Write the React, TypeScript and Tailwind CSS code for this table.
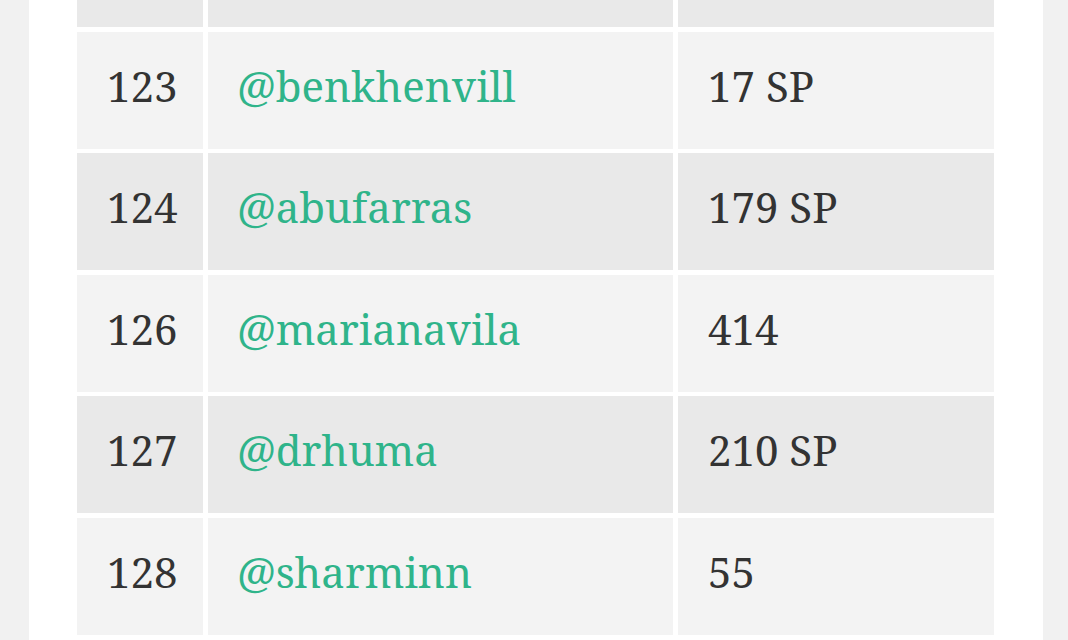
const rows = [
  { rank: "123", user: "@benkhenvill", score: "17 SP" },
  { rank: "124", user: "@abufarras", score: "179 SP" },
  { rank: "126", user: "@marianavila", score: "414" },
  { rank: "127", user: "@drhuma", score: "210 SP" },
  { rank: "128", user: "@sharminn", score: "55" },
]

function Row({ rank, user, score, dark }: { rank: string; user: string; score: string; dark: boolean }) {
  const bg = dark ? "bg-[#e9e9e9]" : "bg-[#f3f3f3]"
  return (
    <div className="flex gap-[5px] h-[117px] shrink-0">
      <div className={`${bg} w-[126px] flex items-center pl-[30px] pb-[10px] text-[#333]`}>{rank}</div>
      <div className={`${bg} w-[465px] flex items-center pl-[29px] pb-[10px] text-[#2fb48a]`}>{user}</div>
      <div className={`${bg} w-[316px] flex items-center pl-[30px] pb-[10px] text-[#333]`}>{score}</div>
    </div>
  )
}

export default function App() {
  return (
    <main className="h-[640px] overflow-hidden bg-[#f1f1f1] pl-[29px] pr-[25px] [font-family:'Noto_Serif','Liberation_Serif',serif]">
      <div className="bg-white h-full pl-[48px]">
        <div className="flex flex-col gap-[4.5px] text-[42px]">
          <div className="flex gap-[5px] h-[27px] shrink-0">
            <div className="bg-[#e9e9e9] w-[126px]" />
            <div className="bg-[#e9e9e9] w-[465px]" />
            <div className="bg-[#e9e9e9] w-[316px]" />
          </div>
          {rows.map((r, i) => (
            <Row key={r.rank} {...r} dark={i % 2 === 1} />
          ))}
        </div>
      </div>
    </main>
  )
}
